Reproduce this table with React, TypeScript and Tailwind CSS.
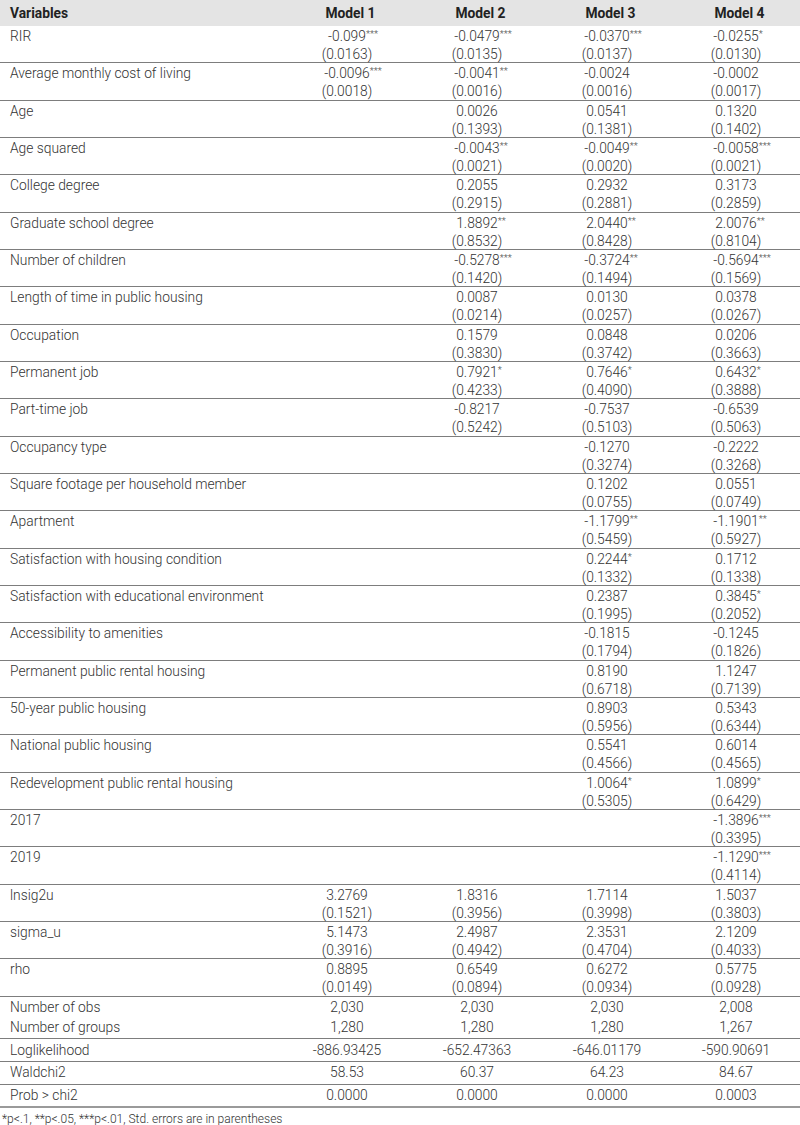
import React from "react";

type Cell = [string, string, string] | null; // coef, stars, se

const rows: { name: string; cells: Cell[] }[] = [
  { name: "RIR", cells: [["-0.099", "***", "(0.0163)"], ["-0.0479", "***", "(0.0135)"], ["-0.0370", "***", "(0.0137)"], ["-0.0255", "*", "(0.0130)"]] },
  { name: "Average monthly cost of living", cells: [["-0.0096", "***", "(0.0018)"], ["-0.0041", "**", "(0.0016)"], ["-0.0024", "", "(0.0016)"], ["-0.0002", "", "(0.0017)"]] },
  { name: "Age", cells: [null, ["0.0026", "", "(0.1393)"], ["0.0541", "", "(0.1381)"], ["0.1320", "", "(0.1402)"]] },
  { name: "Age squared", cells: [null, ["-0.0043", "**", "(0.0021)"], ["-0.0049", "**", "(0.0020)"], ["-0.0058", "***", "(0.0021)"]] },
  { name: "College degree", cells: [null, ["0.2055", "", "(0.2915)"], ["0.2932", "", "(0.2881)"], ["0.3173", "", "(0.2859)"]] },
  { name: "Graduate school degree", cells: [null, ["1.8892", "**", "(0.8532)"], ["2.0440", "**", "(0.8428)"], ["2.0076", "**", "(0.8104)"]] },
  { name: "Number of children", cells: [null, ["-0.5278", "***", "(0.1420)"], ["-0.3724", "**", "(0.1494)"], ["-0.5694", "***", "(0.1569)"]] },
  { name: "Length of time in public housing", cells: [null, ["0.0087", "", "(0.0214)"], ["0.0130", "", "(0.0257)"], ["0.0378", "", "(0.0267)"]] },
  { name: "Occupation", cells: [null, ["0.1579", "", "(0.3830)"], ["0.0848", "", "(0.3742)"], ["0.0206", "", "(0.3663)"]] },
  { name: "Permanent job", cells: [null, ["0.7921", "*", "(0.4233)"], ["0.7646", "*", "(0.4090)"], ["0.6432", "*", "(0.3888)"]] },
  { name: "Part-time job", cells: [null, ["-0.8217", "", "(0.5242)"], ["-0.7537", "", "(0.5103)"], ["-0.6539", "", "(0.5063)"]] },
  { name: "Occupancy type", cells: [null, null, ["-0.1270", "", "(0.3274)"], ["-0.2222", "", "(0.3268)"]] },
  { name: "Square footage per household member", cells: [null, null, ["0.1202", "", "(0.0755)"], ["0.0551", "", "(0.0749)"]] },
  { name: "Apartment", cells: [null, null, ["-1.1799", "**", "(0.5459)"], ["-1.1901", "**", "(0.5927)"]] },
  { name: "Satisfaction with housing condition", cells: [null, null, ["0.2244", "*", "(0.1332)"], ["0.1712", "", "(0.1338)"]] },
  { name: "Satisfaction with educational environment", cells: [null, null, ["0.2387", "", "(0.1995)"], ["0.3845", "*", "(0.2052)"]] },
  { name: "Accessibility to amenities", cells: [null, null, ["-0.1815", "", "(0.1794)"], ["-0.1245", "", "(0.1826)"]] },
  { name: "Permanent public rental housing", cells: [null, null, ["0.8190", "", "(0.6718)"], ["1.1247", "", "(0.7139)"]] },
  { name: "50-year public housing", cells: [null, null, ["0.8903", "", "(0.5956)"], ["0.5343", "", "(0.6344)"]] },
  { name: "National public housing", cells: [null, null, ["0.5541", "", "(0.4566)"], ["0.6014", "", "(0.4565)"]] },
  { name: "Redevelopment public rental housing", cells: [null, null, ["1.0064", "*", "(0.5305)"], ["1.0899", "*", "(0.6429)"]] },
  { name: "2017", cells: [null, null, null, ["-1.3896", "***", "(0.3395)"]] },
  { name: "2019", cells: [null, null, null, ["-1.1290", "***", "(0.4114)"]] },
  { name: "lnsig2u", cells: [["3.2769", "", "(0.1521)"], ["1.8316", "", "(0.3956)"], ["1.7114", "", "(0.3998)"], ["1.5037", "", "(0.3803)"]] },
  { name: "sigma_u", cells: [["5.1473", "", "(0.3916)"], ["2.4987", "", "(0.4942)"], ["2.3531", "", "(0.4704)"], ["2.1209", "", "(0.4033)"]] },
  { name: "rho", cells: [["0.8895", "", "(0.0149)"], ["0.6549", "", "(0.0894)"], ["0.6272", "", "(0.0934)"], ["0.5775", "", "(0.0928)"]] },
];

const colW = ["w-[130px]", "w-[130px]", "w-[130px]", "flex-1"];

function Stars({ s }: { s: string }) {
  if (!s) return null;
  return <span className="absolute left-full top-[2px] text-[9.5px] leading-none">{s}</span>;
}

function TwoLineRow({ name, cells }: { name: string; cells: Cell[] }) {
  return (
    <div className="flex h-[37.33px] border-b border-[#7d7d7d]">
      <div className="w-[282px] pl-[10px] pt-[1px] leading-[18px]">{name}</div>
      {cells.map((c, i) => (
        <div key={i} className={`${colW[i]} flex flex-col items-center pt-[1px] leading-[18px]`}>
          {c && (
            <>
              <span className="relative">
                {c[0]}
                <Stars s={c[1]} />
              </span>
              <span>{c[2]}</span>
            </>
          )}
        </div>
      ))}
    </div>
  );
}

function OneLine({ name, vals }: { name: string; vals: string[] }) {
  return (
    <div className="flex h-[21.67px] items-center">
      <div className="w-[282px] pl-[10px]">{name}</div>
      {vals.map((v, i) => (
        <div key={i} className={`${colW[i]} text-center`}>
          {v}
        </div>
      ))}
    </div>
  );
}

export default function App() {
  return (
    <div
      className="w-[800px] h-[1125px] bg-white text-[13.8px] font-light text-[#333]"
      style={{ fontFamily: "Roboto, 'Noto Sans', sans-serif" }}
    >
      <div className="flex h-[26px] items-center bg-[#e4e4e4] font-bold text-[#222]">
        <div className="w-[282px] pl-[10px]">Variables</div>
        {["Model 1", "Model 2", "Model 3", "Model 4"].map((m, i) => (
          <div key={m} className={`${colW[i]} pl-[7px] text-center`}>
            {m}
          </div>
        ))}
      </div>
      {rows.map((r) => (
        <TwoLineRow key={r.name} name={r.name} cells={r.cells} />
      ))}
      <div className="border-b border-[#7d7d7d] h-[42.67px] flex flex-col justify-center">
        <OneLine name="Number of obs" vals={["2,030", "2,030", "2,030", "2,008"]} />
        <OneLine name="Number of groups" vals={["1,280", "1,280", "1,280", "1,267"]} />
      </div>
      <div className="border-b border-[#7d7d7d]">
        <OneLine name="Loglikelihood" vals={["-886.93425", "-652.47363", "-646.01179", "-590.90691"]} />
      </div>
      <div className="border-b border-[#7d7d7d]">
        <OneLine name="Waldchi2" vals={["58.53", "60.37", "64.23", "84.67"]} />
      </div>
      <div className="border-b-2 border-[#9a9a9a]">
        <OneLine name="Prob > chi2" vals={["0.0000", "0.0000", "0.0000", "0.0003"]} />
      </div>
      <div className="pl-[2px] pt-[3px] text-[12px] leading-[16px]">
        *p&lt;.1, **p&lt;.05, ***p&lt;.01, Std. errors are in parentheses
      </div>
    </div>
  );
}
